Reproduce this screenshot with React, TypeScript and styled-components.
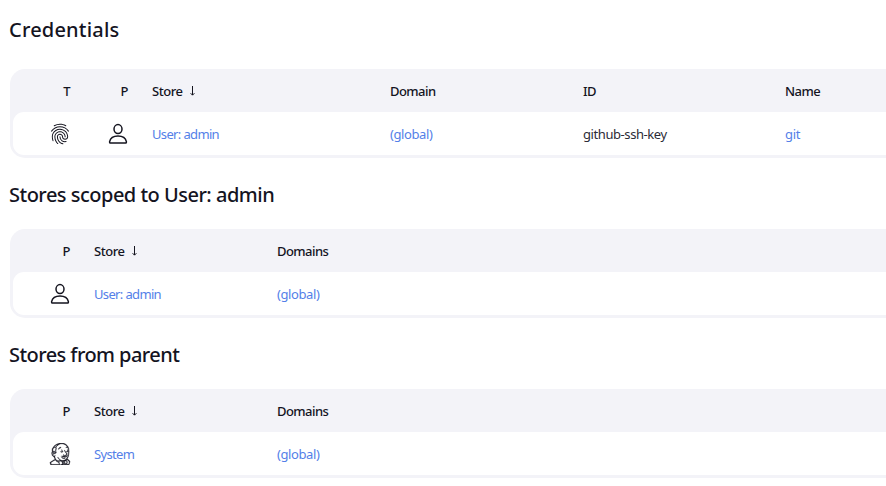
import React from "react";
import styled, { createGlobalStyle } from "styled-components";
import { IoFingerPrintOutline } from "react-icons/io5";
import { SiJenkins } from "react-icons/si";

const GlobalStyle = createGlobalStyle`
  * { box-sizing: border-box; }
  html, body { margin: 0; background: #fff; overflow: hidden; }
  body {
    font-family: "Noto Sans", "Open Sans", sans-serif;
    font-size: 13px;
    color: #14141f;
  }
`;

const Page = styled.main`
  width: 886px;
  height: 486px;
  padding-left: 9.5px;
  overflow: hidden;
`;

const Section = styled.section`
  height: 160px;
  &:first-child { height: 165px; }
  &:first-child > h2 { height: 69px; padding-top: 15px; }
`;

const Heading = styled.h2<{ $spacing: number }>`
  height: 64px;
  margin: 0 0 0 -0.5px;
  padding-top: 15px;
  font-size: 20px;
  font-weight: 550;
  line-height: 30px;
  letter-spacing: ${(p) => p.$spacing}px;
  white-space: nowrap;
`;

const Table = styled.div`
  width: 920px;
  height: 89px;
  padding: 0 3px 3px;
  border-radius: 15px;
  background: #f3f3f8;
`;

const Row = styled.div<{ $columns: string }>`
  display: grid;
  grid-template-columns: ${(p) => p.$columns};
  align-items: center;
  white-space: nowrap;
`;

const HeaderRow = styled(Row)`
  height: 43px;
  font-size: 13px;
  font-weight: 550;
`;

const BodyRow = styled(Row)`
  height: 43px;
  border-radius: 11px;
  background: #fff;
`;

const IconHeader = styled.span`
  padding-right: 23.5px;
  text-align: right;
`;

const IconCell = styled.span`
  display: flex;
  justify-content: flex-end;
  padding-right: 23px;
  svg { display: block; width: 22px; height: 22px; }
`;

const Label = styled.span<{ $spacing?: number }>`
  letter-spacing: ${(p) => p.$spacing ?? -0.55}px;
`;

const CellText = styled(Label)`
  color: #2b2b36;
`;

const SortArrow = styled.svg`
  width: 5px;
  height: 10px;
  margin-left: 7px;
`;

const Link = styled.a<{ $spacing?: number }>`
  justify-self: start;
  color: #5480e8;
  text-decoration: none;
  letter-spacing: ${(p) => p.$spacing ?? -0.65}px;
`;

const StoreHeader = () => (
  <Label $spacing={-0.45}>
    Store
    <SortArrow viewBox="0 0 5 10" fill="none" stroke="currentColor" strokeWidth="1">
      <path d="M2.5 0v9M.6 7.2l1.9 2 1.9-2" />
    </SortArrow>
  </Label>
);

const PersonIcon = () => (
  <svg viewBox="0 0 22 22" fill="none" stroke="currentColor" strokeWidth="1.5" strokeLinejoin="round">
    <ellipse cx="11" cy="6.1" rx="4" ry="4.5" />
    <path d="M11 13.1c-4.2 0-7.6 2-8.4 5.6-.15.8.3 1.4 1 1.4h14.8c.7 0 1.15-.6 1-1.4-.8-3.6-4.2-5.6-8.4-5.6z" />
  </svg>
);

const JenkinsIcon = styled(SiJenkins)`
  stroke: currentColor;
  stroke-width: 0.4;
`;

const credentialColumns = "81.5px 58px 238px 193px 202px 1fr";
const storeColumns = "81.5px 183px 1fr";

interface StoreSectionProps {
  title: string;
  titleSpacing: number;
  icon: React.ReactNode;
  store: string;
}

const StoreSection = ({ title, titleSpacing, icon, store }: StoreSectionProps) => (
  <Section>
    <Heading $spacing={titleSpacing}>{title}</Heading>
    <Table>
      <HeaderRow $columns={storeColumns}>
        <IconHeader>P</IconHeader>
        <StoreHeader />
        <Label>Domains</Label>
      </HeaderRow>
      <BodyRow $columns={storeColumns}>
        <IconCell>{icon}</IconCell>
        <Link>{store}</Link>
        <Link $spacing={-0.4}>(global)</Link>
      </BodyRow>
    </Table>
  </Section>
);

export default function App() {
  return (
    <>
      <GlobalStyle />
      <Page>
        <Section>
          <Heading $spacing={0.2}>Credentials</Heading>
          <Table>
            <HeaderRow $columns={credentialColumns}>
              <IconHeader>T</IconHeader>
              <IconHeader>P</IconHeader>
              <StoreHeader />
              <Label>Domain</Label>
              <Label>ID</Label>
              <Label>Name</Label>
            </HeaderRow>
            <BodyRow $columns={credentialColumns}>
              <IconCell><IoFingerPrintOutline /></IconCell>
              <IconCell><PersonIcon /></IconCell>
              <Link>User: admin</Link>
              <Link $spacing={-0.4}>(global)</Link>
              <CellText $spacing={-0.42}>github-ssh-key</CellText>
              <Link $spacing={-0.3}>git</Link>
            </BodyRow>
          </Table>
        </Section>
        <StoreSection title="Stores scoped to User: admin" titleSpacing={-0.51} icon={<PersonIcon />} store="User: admin" />
        <StoreSection title="Stores from parent" titleSpacing={-0.57} icon={<JenkinsIcon />} store="System" />
      </Page>
    </>
  );
}
